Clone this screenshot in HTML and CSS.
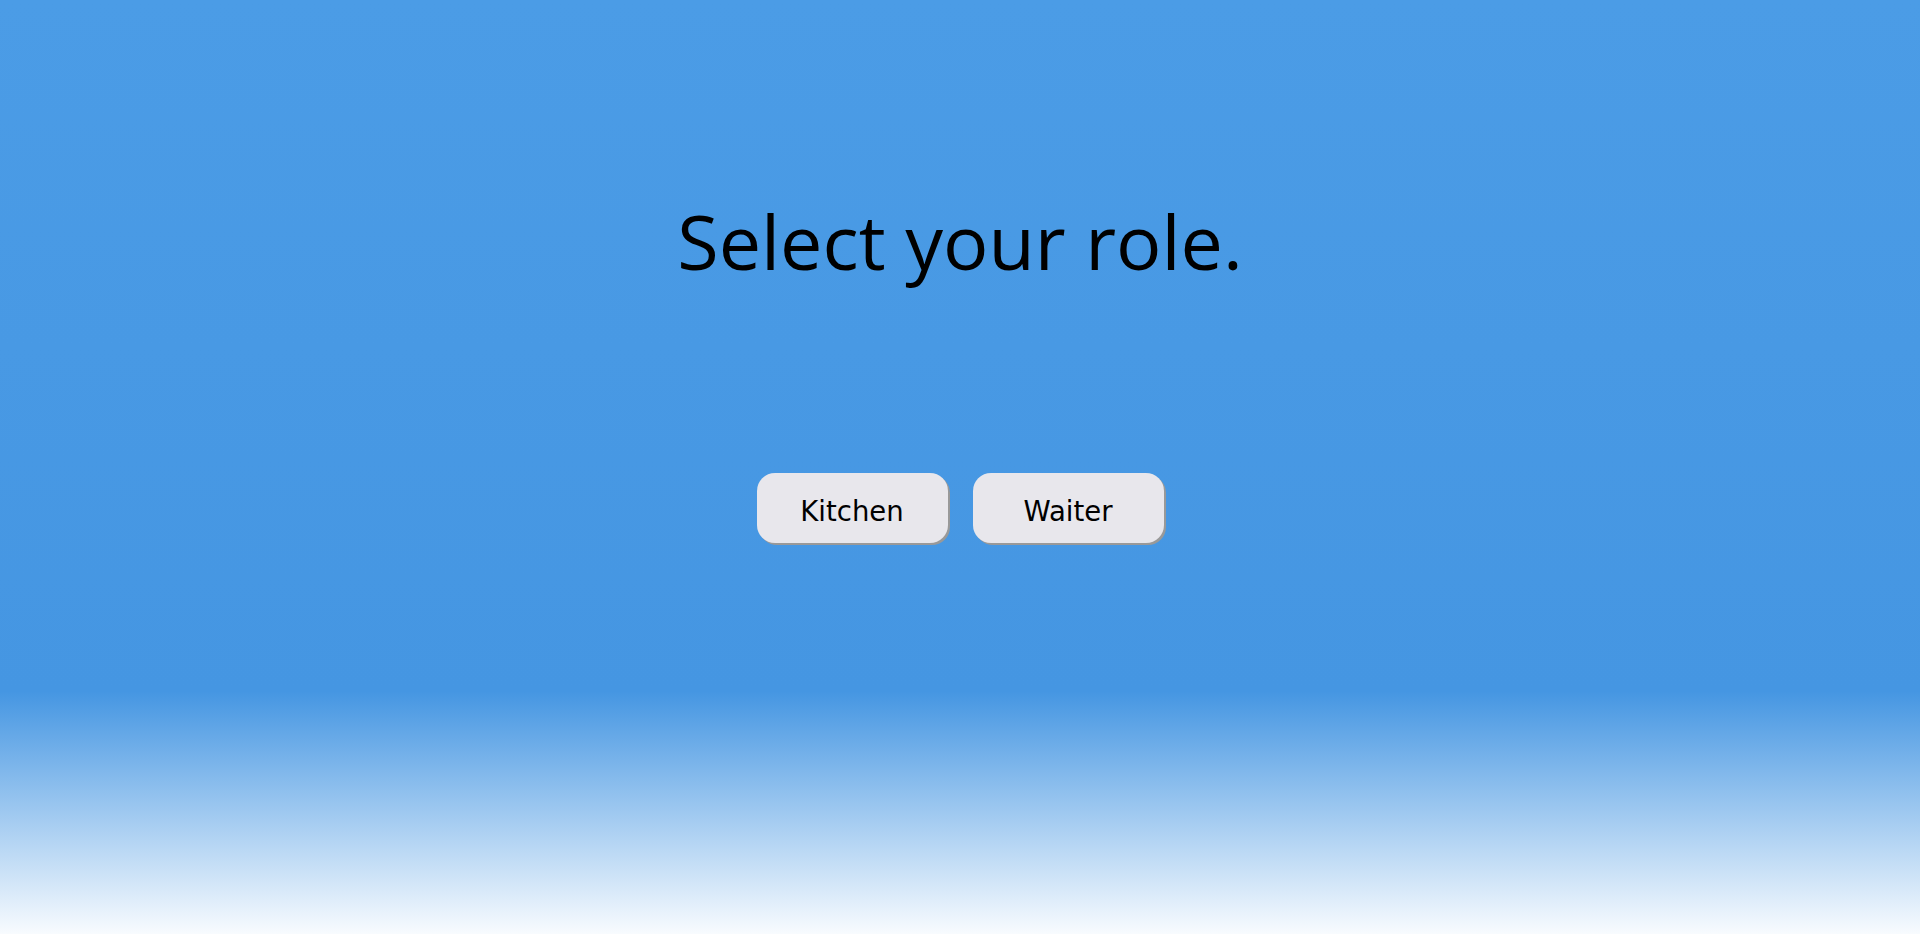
FILE: index.html
```html
<!DOCTYPE html>
<html>
<head>
<meta charset="utf-8">
<link rel="stylesheet" href="styles.css">
</head>
<body>
<main class="page">
  <h1 class="title">Select your role.</h1>
  <div class="roles">
    <button class="role-btn">Kitchen</button>
    <button class="role-btn">Waiter</button>
  </div>
</main>
</body>
</html>
```
FILE: styles.css
```css
html, body {
  margin: 0;
  padding: 0;
  height: 100%;
}
body {
  background: linear-gradient(to bottom, #4b9ce6 0%, #4596e2 74%, #f8fbfe 100%);
  font-family: "Open Sans", "Noto Sans", sans-serif;
}
.page {
  display: flex;
  flex-direction: column;
  align-items: center;
  padding-top: 192px;
}
.title {
  margin: 0;
  font-weight: 400;
  font-size: 75.5px;
  line-height: 98px;
  color: #000;
}
.roles {
  display: flex;
  gap: 25px;
  margin-top: 183px;
}
.role-btn {
  width: 191px;
  height: 70px;
  border: none;
  border-radius: 18px;
  background: #e8e7ec;
  box-shadow: 2px 2px 0 #999;
  font-family: "DejaVu Sans", sans-serif;
  font-size: 27.5px;
  color: #000;
  padding: 5px 0 0;
  cursor: pointer;
}
```
